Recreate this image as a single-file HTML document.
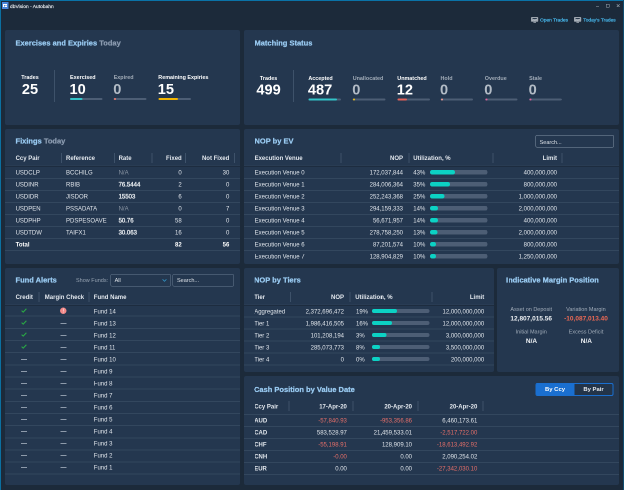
<!DOCTYPE html>
<html><head><meta charset="utf-8"><style>
html,body{margin:0;padding:0;width:624px;height:490px;overflow:hidden;background:#1c2a3a;}
body{position:relative;font-family:"Liberation Sans",sans-serif;}
#w{position:absolute;left:0;top:0;width:1248px;height:980px;transform:scale(0.5);transform-origin:0 0;will-change:transform;}
#w>div,#w>svg{position:absolute;white-space:nowrap;}
</style></head><body><div id="w">
<div style="left:0px;top:0px;width:1248px;height:2px;background:#0a73a8;"></div>
<div style="left:0px;top:0px;width:2px;height:980px;background:#0b6fa0;"></div>
<div style="left:1246px;top:0px;width:2px;height:980px;background:#104e70;"></div>
<div style="left:4px;top:4px;width:13px;height:13.6px;background:#4a86d8;"></div>
<div style="left:6px;top:8px;width:2px;height:6px;background:#ffffff;"></div>
<div style="left:6px;top:8px;width:8.4px;height:1.8px;background:#ffffff;"></div>
<div style="left:9.2px;top:12.2px;width:5.2px;height:1.8px;background:#ffffff;"></div>
<div style="left:11.2px;top:9.6px;width:1.6px;height:2.8px;background:#ffffff;"></div>
<div style="left:20px;top:7.5px;font-size:9.8px;line-height:9.8px;color:#e6eaee;-webkit-text-stroke:0.3px #e6eaee;">dbVision - Autobahn</div>
<div style="left:1192px;top:12.6px;width:6.4px;height:1.2px;background:#9aa4ae;"></div>
<div style="left:1212.4px;top:8px;width:4.4px;height:4.8px;border:1.2px solid #9aa4ae;border-radius:0.8px;"></div>
<svg style="left:1233px;top:7.6px;width:6.8px;height:6.8px" viewBox="0 0 4 4"><path d="M0.3 0.3 L3.7 3.7 M3.7 0.3 L0.3 3.7" stroke="#9aa4ae" stroke-width="0.7"/></svg>
<svg style="left:1062px;top:34px;width:14.8px;height:12px" viewBox="0 0 7.4 6"><rect x="0" y="0" width="7.2" height="4.8" rx="0.8" fill="#9ea6af"/><rect x="1.6" y="1" width="4.2" height="1.1" fill="#2a3a4c"/><path d="M1.2 3.6 L2.6 2.7 L3.6 3.3 L5.8 2.4" stroke="#c9ced4" stroke-width="0.5" fill="none"/><rect x="2.4" y="4.8" width="2.6" height="1" fill="#9ea6af"/></svg>
<div style="left:1080px;top:35.38px;font-size:9.7px;line-height:9.7px;color:#48b8ec;-webkit-text-stroke:0.4px #48b8ec;">Open Trades</div>
<svg style="left:1148px;top:34px;width:14.8px;height:12px" viewBox="0 0 7.4 6"><rect x="0" y="0" width="7.2" height="4.8" rx="0.8" fill="#9ea6af"/><rect x="1.6" y="1" width="4.2" height="1.1" fill="#2a3a4c"/><path d="M1.2 3.6 L2.6 2.7 L3.6 3.3 L5.8 2.4" stroke="#c9ced4" stroke-width="0.5" fill="none"/><rect x="2.4" y="4.8" width="2.6" height="1" fill="#9ea6af"/></svg>
<div style="left:1166.6px;top:35.38px;font-size:9.7px;line-height:9.7px;color:#48b8ec;-webkit-text-stroke:0.4px #48b8ec;">Today's Trades</div>
<div style="left:10px;top:60px;width:470px;height:190px;background:#24374f;border-radius:4px;"></div>
<div style="left:488px;top:60px;width:750px;height:190px;background:#24374f;border-radius:4px;"></div>
<div style="left:10px;top:258px;width:470px;height:270px;background:#24374f;border-radius:4px;"></div>
<div style="left:488px;top:258px;width:750px;height:270px;background:#24374f;border-radius:4px;"></div>
<div style="left:10px;top:536px;width:470px;height:434px;background:#24374f;border-radius:4px;"></div>
<div style="left:488px;top:536px;width:500px;height:208px;background:#24374f;border-radius:4px;"></div>
<div style="left:994px;top:536px;width:244px;height:208px;background:#24374f;border-radius:4px;"></div>
<div style="left:488px;top:752px;width:750px;height:218px;background:#24374f;border-radius:4px;"></div>
<div style="left:31.2px;top:77.74px;font-size:15.2px;line-height:15.2px;color:#9acbf2;font-weight:bold;transform:scaleX(0.9868);transform-origin:0 0;-webkit-text-stroke:0.5px;">Exercises and Expiries <span style="color:#8b9bb0">Today</span></div>
<div style="left:509.2px;top:78.14px;font-size:15.2px;line-height:15.2px;color:#9acbf2;font-weight:bold;transform:scaleX(0.9868);transform-origin:0 0;-webkit-text-stroke:0.5px;">Matching Status</div>
<div style="left:31.2px;top:273.74px;font-size:15.2px;line-height:15.2px;color:#9acbf2;font-weight:bold;transform:scaleX(0.9868);transform-origin:0 0;-webkit-text-stroke:0.5px;">Fixings <span style="color:#8b9bb0">Today</span></div>
<div style="left:509.2px;top:274.34px;font-size:15.2px;line-height:15.2px;color:#9acbf2;font-weight:bold;transform:scaleX(0.9868);transform-origin:0 0;-webkit-text-stroke:0.5px;">NOP by EV</div>
<div style="left:31.2px;top:551.54px;font-size:15.2px;line-height:15.2px;color:#9acbf2;font-weight:bold;transform:scaleX(0.9868);transform-origin:0 0;-webkit-text-stroke:0.5px;">Fund Alerts</div>
<div style="left:508.4px;top:551.94px;font-size:15.2px;line-height:15.2px;color:#9acbf2;font-weight:bold;transform:scaleX(0.9868);transform-origin:0 0;-webkit-text-stroke:0.5px;">NOP by Tiers</div>
<div style="left:1011.6px;top:552.34px;font-size:15.2px;line-height:15.2px;color:#9acbf2;font-weight:bold;transform:scaleX(0.9868);transform-origin:0 0;-webkit-text-stroke:0.5px;">Indicative Margin Position</div>
<div style="left:508.4px;top:771.34px;font-size:15.2px;line-height:15.2px;color:#9acbf2;font-weight:bold;transform:scaleX(0.9868);transform-origin:0 0;-webkit-text-stroke:0.5px;">Cash Position by Value Date</div>
<div style="left:-240px;width:600px;text-align:center;top:149.46px;font-size:10.8px;line-height:10.8px;color:#ffffff;font-weight:bold;">Trades</div>
<div style="left:-240px;width:600px;text-align:center;top:163.88px;font-size:29.2px;line-height:29.2px;color:#ffffff;font-weight:bold;">25</div>
<div style="left:108px;top:140px;width:2px;height:64px;background:#3e526a;"></div>
<div style="left:140px;top:149.46px;font-size:10.8px;line-height:10.8px;color:#ffffff;font-weight:bold;">Exercised</div>
<div style="left:139px;top:163.88px;font-size:29.2px;line-height:29.2px;color:#ffffff;font-weight:bold;">10</div>
<div style="left:140px;top:196px;width:65.2px;height:4px;background:#4d5e75;border-radius:2px;"></div>
<div style="left:140px;top:196px;width:25.2px;height:4px;background:#33c4c8;border-radius:2px;"></div>
<div style="left:227.4px;top:149.46px;font-size:10.8px;line-height:10.8px;color:#a2acb8;font-weight:bold;">Expired</div>
<div style="left:226.4px;top:163.88px;font-size:29.2px;line-height:29.2px;color:#b3bcc6;font-weight:bold;">0</div>
<div style="left:227.4px;top:196px;width:65.2px;height:4px;background:#4d5e75;border-radius:2px;"></div>
<div style="left:228.4px;top:196px;width:4px;height:4px;background:#f07a6c;border-radius:2px;"></div>
<div style="left:316.6px;top:149.46px;font-size:10.8px;line-height:10.8px;color:#ffffff;font-weight:bold;">Remaining Expiries</div>
<div style="left:315.6px;top:163.88px;font-size:29.2px;line-height:29.2px;color:#ffffff;font-weight:bold;">15</div>
<div style="left:316.6px;top:196px;width:65.2px;height:4px;background:#4d5e75;border-radius:2px;"></div>
<div style="left:316.6px;top:196px;width:39.4px;height:4px;background:#f1b400;border-radius:2px;"></div>
<div style="left:237.2px;width:600px;text-align:center;top:150.66px;font-size:10.8px;line-height:10.8px;color:#ffffff;font-weight:bold;">Trades</div>
<div style="left:237.2px;width:600px;text-align:center;top:165.08px;font-size:29.2px;line-height:29.2px;color:#ffffff;font-weight:bold;">499</div>
<div style="left:586px;top:141px;width:2px;height:64px;background:#3e526a;"></div>
<div style="left:616.8px;top:150.66px;font-size:10.8px;line-height:10.8px;color:#ffffff;font-weight:bold;">Accepted</div>
<div style="left:615.8px;top:165.08px;font-size:29.2px;line-height:29.2px;color:#ffffff;font-weight:bold;">487</div>
<div style="left:616.8px;top:197.2px;width:65.2px;height:4px;background:#4d5e75;border-radius:2px;"></div>
<div style="left:616.8px;top:197.2px;width:57px;height:4px;background:#33c4c8;border-radius:2px;"></div>
<div style="left:705.4px;top:150.66px;font-size:10.8px;line-height:10.8px;color:#a2acb8;font-weight:bold;">Unallocated</div>
<div style="left:704.4px;top:165.08px;font-size:29.2px;line-height:29.2px;color:#b3bcc6;font-weight:bold;">0</div>
<div style="left:705.4px;top:197.2px;width:65.2px;height:4px;background:#4d5e75;border-radius:2px;"></div>
<div style="left:706.4px;top:197.2px;width:4px;height:4px;background:#f1c21b;border-radius:2px;"></div>
<div style="left:794.6px;top:150.66px;font-size:10.8px;line-height:10.8px;color:#ffffff;font-weight:bold;">Unmatched</div>
<div style="left:793.6px;top:165.08px;font-size:29.2px;line-height:29.2px;color:#ffffff;font-weight:bold;">12</div>
<div style="left:794.6px;top:197.2px;width:65.2px;height:4px;background:#4d5e75;border-radius:2px;"></div>
<div style="left:794.6px;top:197.2px;width:19.4px;height:4px;background:#e2625a;border-radius:2px;"></div>
<div style="left:881px;top:150.66px;font-size:10.8px;line-height:10.8px;color:#a2acb8;font-weight:bold;">Hold</div>
<div style="left:880px;top:165.08px;font-size:29.2px;line-height:29.2px;color:#b3bcc6;font-weight:bold;">0</div>
<div style="left:881px;top:197.2px;width:65.2px;height:4px;background:#4d5e75;border-radius:2px;"></div>
<div style="left:882px;top:197.2px;width:4px;height:4px;background:#f39a94;border-radius:2px;"></div>
<div style="left:969.6px;top:150.66px;font-size:10.8px;line-height:10.8px;color:#a2acb8;font-weight:bold;">Overdue</div>
<div style="left:968.6px;top:165.08px;font-size:29.2px;line-height:29.2px;color:#b3bcc6;font-weight:bold;">0</div>
<div style="left:969.6px;top:197.2px;width:65.2px;height:4px;background:#4d5e75;border-radius:2px;"></div>
<div style="left:970.6px;top:197.2px;width:4px;height:4px;background:#e0609e;border-radius:2px;"></div>
<div style="left:1058.2px;top:150.66px;font-size:10.8px;line-height:10.8px;color:#a2acb8;font-weight:bold;">Stale</div>
<div style="left:1057.2px;top:165.08px;font-size:29.2px;line-height:29.2px;color:#b3bcc6;font-weight:bold;">0</div>
<div style="left:1058.2px;top:197.2px;width:65.2px;height:4px;background:#4d5e75;border-radius:2px;"></div>
<div style="left:1059.2px;top:197.2px;width:4px;height:4px;background:#e0609e;border-radius:2px;"></div>
<div style="left:122px;top:306px;width:2px;height:20px;background:#3e526a;"></div>
<div style="left:228px;top:306px;width:2px;height:20px;background:#3e526a;"></div>
<div style="left:303px;top:306px;width:2px;height:20px;background:#3e526a;"></div>
<div style="left:370px;top:306px;width:2px;height:20px;background:#3e526a;"></div>
<div style="left:468px;top:306px;width:2px;height:20px;background:#3e526a;"></div>
<div style="left:31.2px;top:310.44px;font-size:12px;line-height:12px;color:#e4e9ef;font-weight:bold;">Ccy Pair</div>
<div style="left:132px;top:310.44px;font-size:12px;line-height:12px;color:#e4e9ef;font-weight:bold;">Reference</div>
<div style="left:237.2px;top:310.44px;font-size:12px;line-height:12px;color:#e4e9ef;font-weight:bold;">Rate</div>
<div style="left:-236.6px;width:600px;text-align:right;top:310.44px;font-size:12px;line-height:12px;color:#e4e9ef;font-weight:bold;">Fixed</div>
<div style="left:-141.4px;width:600px;text-align:right;top:310.44px;font-size:12px;line-height:12px;color:#e4e9ef;font-weight:bold;">Not Fixed</div>
<div style="left:10px;top:330.8px;width:470px;height:1px;background:#2f4259;"></div>
<div style="left:10px;top:331.8px;width:470px;height:2px;background:#1d2c3f;"></div>
<div style="left:31.2px;top:339.44px;font-size:12px;line-height:12px;color:#e2e7ed;">USDCLP</div>
<div style="left:132px;top:339.44px;font-size:12px;line-height:12px;color:#e2e7ed;">BCCHILG</div>
<div style="left:237.2px;top:339.44px;font-size:12px;line-height:12px;color:#8a96a4;">N/A</div>
<div style="left:-236.6px;width:600px;text-align:right;top:339.44px;font-size:12px;line-height:12px;color:#e2e7ed;">0</div>
<div style="left:-141.4px;width:600px;text-align:right;top:339.44px;font-size:12px;line-height:12px;color:#e2e7ed;">30</div>
<div style="left:10px;top:355.8px;width:470px;height:2px;background:#33475e;"></div>
<div style="left:31.2px;top:363.44px;font-size:12px;line-height:12px;color:#e2e7ed;">USDINR</div>
<div style="left:132px;top:363.44px;font-size:12px;line-height:12px;color:#e2e7ed;">RBIB</div>
<div style="left:237.2px;top:363.44px;font-size:12px;line-height:12px;color:#e6eaee;-webkit-text-stroke:0.6px #e6eaee;">76.5444</div>
<div style="left:-236.6px;width:600px;text-align:right;top:363.44px;font-size:12px;line-height:12px;color:#e2e7ed;">2</div>
<div style="left:-141.4px;width:600px;text-align:right;top:363.44px;font-size:12px;line-height:12px;color:#e2e7ed;">0</div>
<div style="left:10px;top:379.8px;width:470px;height:2px;background:#33475e;"></div>
<div style="left:31.2px;top:387.44px;font-size:12px;line-height:12px;color:#e2e7ed;">USDIDR</div>
<div style="left:132px;top:387.44px;font-size:12px;line-height:12px;color:#e2e7ed;">JISDOR</div>
<div style="left:237.2px;top:387.44px;font-size:12px;line-height:12px;color:#e6eaee;-webkit-text-stroke:0.6px #e6eaee;">15503</div>
<div style="left:-236.6px;width:600px;text-align:right;top:387.44px;font-size:12px;line-height:12px;color:#e2e7ed;">6</div>
<div style="left:-141.4px;width:600px;text-align:right;top:387.44px;font-size:12px;line-height:12px;color:#e2e7ed;">0</div>
<div style="left:10px;top:403.8px;width:470px;height:2px;background:#33475e;"></div>
<div style="left:31.2px;top:411.44px;font-size:12px;line-height:12px;color:#e2e7ed;">USDPEN</div>
<div style="left:132px;top:411.44px;font-size:12px;line-height:12px;color:#e2e7ed;">PSSADATA</div>
<div style="left:237.2px;top:411.44px;font-size:12px;line-height:12px;color:#8a96a4;">N/A</div>
<div style="left:-236.6px;width:600px;text-align:right;top:411.44px;font-size:12px;line-height:12px;color:#e2e7ed;">0</div>
<div style="left:-141.4px;width:600px;text-align:right;top:411.44px;font-size:12px;line-height:12px;color:#e2e7ed;">7</div>
<div style="left:10px;top:427.8px;width:470px;height:2px;background:#33475e;"></div>
<div style="left:31.2px;top:435.44px;font-size:12px;line-height:12px;color:#e2e7ed;">USDPHP</div>
<div style="left:132px;top:435.44px;font-size:12px;line-height:12px;color:#e2e7ed;">PDSPESOAVE</div>
<div style="left:237.2px;top:435.44px;font-size:12px;line-height:12px;color:#e6eaee;-webkit-text-stroke:0.6px #e6eaee;">50.76</div>
<div style="left:-236.6px;width:600px;text-align:right;top:435.44px;font-size:12px;line-height:12px;color:#e2e7ed;">58</div>
<div style="left:-141.4px;width:600px;text-align:right;top:435.44px;font-size:12px;line-height:12px;color:#e2e7ed;">0</div>
<div style="left:10px;top:451.8px;width:470px;height:2px;background:#33475e;"></div>
<div style="left:31.2px;top:459.44px;font-size:12px;line-height:12px;color:#e2e7ed;">USDTDW</div>
<div style="left:132px;top:459.44px;font-size:12px;line-height:12px;color:#e2e7ed;">TAIFX1</div>
<div style="left:237.2px;top:459.44px;font-size:12px;line-height:12px;color:#e6eaee;-webkit-text-stroke:0.6px #e6eaee;">30.063</div>
<div style="left:-236.6px;width:600px;text-align:right;top:459.44px;font-size:12px;line-height:12px;color:#e2e7ed;">16</div>
<div style="left:-141.4px;width:600px;text-align:right;top:459.44px;font-size:12px;line-height:12px;color:#e2e7ed;">0</div>
<div style="left:10px;top:475.8px;width:470px;height:2px;background:#33475e;"></div>
<div style="left:31.2px;top:483.44px;font-size:12px;line-height:12px;color:#ffffff;font-weight:bold;">Total</div>
<div style="left:-236.6px;width:600px;text-align:right;top:483.44px;font-size:12px;line-height:12px;color:#ffffff;font-weight:bold;">82</div>
<div style="left:-141.4px;width:600px;text-align:right;top:483.44px;font-size:12px;line-height:12px;color:#ffffff;font-weight:bold;">56</div>
<div style="left:10px;top:499.8px;width:470px;height:2px;background:#33475e;"></div>
<div style="left:1070.6px;top:270.4px;width:157.4px;height:25px;background:transparent;border:1.6px solid #8393a6;border-radius:3px;box-sizing:border-box;"></div>
<div style="left:1079.2px;top:278.68px;font-size:11px;line-height:11px;color:#dde2e8;">Search...</div>
<div style="left:681px;top:306px;width:2px;height:20px;background:#3e526a;"></div>
<div style="left:816.6px;top:306px;width:2px;height:20px;background:#3e526a;"></div>
<div style="left:984.6px;top:306px;width:2px;height:20px;background:#3e526a;"></div>
<div style="left:1123px;top:306px;width:2px;height:20px;background:#3e526a;"></div>
<div style="left:509.2px;top:310.44px;font-size:12px;line-height:12px;color:#e4e9ef;font-weight:bold;">Execution Venue</div>
<div style="left:206px;width:600px;text-align:right;top:310.44px;font-size:12px;line-height:12px;color:#e4e9ef;font-weight:bold;">NOP</div>
<div style="left:826.6px;top:310.44px;font-size:12px;line-height:12px;color:#e4e9ef;font-weight:bold;">Utilization, %</div>
<div style="left:514px;width:600px;text-align:right;top:310.44px;font-size:12px;line-height:12px;color:#e4e9ef;font-weight:bold;">Limit</div>
<div style="left:488px;top:330.8px;width:750px;height:1px;background:#2f4259;"></div>
<div style="left:488px;top:331.8px;width:750px;height:2px;background:#1d2c3f;"></div>
<div style="left:509.2px;top:339.44px;font-size:12px;line-height:12px;color:#e2e7ed;">Execution Venue 0</div>
<div style="left:206px;width:600px;text-align:right;top:339.44px;font-size:12px;line-height:12px;color:#e2e7ed;">172,037,844</div>
<div style="left:826.6px;top:339.44px;font-size:12px;line-height:12px;color:#e2e7ed;">43%</div>
<div style="left:860px;top:340px;width:115.4px;height:8.6px;background:#4d5e75;border-radius:4.3px;"></div>
<div style="left:860px;top:340px;width:49.6px;height:8.6px;background:#0cd2c4;border-radius:4.3px;"></div>
<div style="left:514px;width:600px;text-align:right;top:339.44px;font-size:12px;line-height:12px;color:#e2e7ed;">400,000,000</div>
<div style="left:488px;top:355.8px;width:750px;height:2px;background:#33475e;"></div>
<div style="left:509.2px;top:363.44px;font-size:12px;line-height:12px;color:#e2e7ed;">Execution Venue 1</div>
<div style="left:206px;width:600px;text-align:right;top:363.44px;font-size:12px;line-height:12px;color:#e2e7ed;">284,006,364</div>
<div style="left:826.6px;top:363.44px;font-size:12px;line-height:12px;color:#e2e7ed;">35%</div>
<div style="left:860px;top:364px;width:115.4px;height:8.6px;background:#4d5e75;border-radius:4.3px;"></div>
<div style="left:860px;top:364px;width:40.4px;height:8.6px;background:#0cd2c4;border-radius:4.3px;"></div>
<div style="left:514px;width:600px;text-align:right;top:363.44px;font-size:12px;line-height:12px;color:#e2e7ed;">800,000,000</div>
<div style="left:488px;top:379.8px;width:750px;height:2px;background:#33475e;"></div>
<div style="left:509.2px;top:387.44px;font-size:12px;line-height:12px;color:#e2e7ed;">Execution Venue 2</div>
<div style="left:206px;width:600px;text-align:right;top:387.44px;font-size:12px;line-height:12px;color:#e2e7ed;">252,243,368</div>
<div style="left:826.6px;top:387.44px;font-size:12px;line-height:12px;color:#e2e7ed;">25%</div>
<div style="left:860px;top:388px;width:115.4px;height:8.6px;background:#4d5e75;border-radius:4.3px;"></div>
<div style="left:860px;top:388px;width:28.8px;height:8.6px;background:#0cd2c4;border-radius:4.3px;"></div>
<div style="left:514px;width:600px;text-align:right;top:387.44px;font-size:12px;line-height:12px;color:#e2e7ed;">1,000,000,000</div>
<div style="left:488px;top:403.8px;width:750px;height:2px;background:#33475e;"></div>
<div style="left:509.2px;top:411.44px;font-size:12px;line-height:12px;color:#e2e7ed;">Execution Venue 3</div>
<div style="left:206px;width:600px;text-align:right;top:411.44px;font-size:12px;line-height:12px;color:#e2e7ed;">294,159,333</div>
<div style="left:826.6px;top:411.44px;font-size:12px;line-height:12px;color:#e2e7ed;">14%</div>
<div style="left:860px;top:412px;width:115.4px;height:8.6px;background:#4d5e75;border-radius:4.3px;"></div>
<div style="left:860px;top:412px;width:16.2px;height:8.6px;background:#0cd2c4;border-radius:4.3px;"></div>
<div style="left:514px;width:600px;text-align:right;top:411.44px;font-size:12px;line-height:12px;color:#e2e7ed;">2,000,000,000</div>
<div style="left:488px;top:427.8px;width:750px;height:2px;background:#33475e;"></div>
<div style="left:509.2px;top:435.44px;font-size:12px;line-height:12px;color:#e2e7ed;">Execution Venue 4</div>
<div style="left:206px;width:600px;text-align:right;top:435.44px;font-size:12px;line-height:12px;color:#e2e7ed;">56,671,957</div>
<div style="left:826.6px;top:435.44px;font-size:12px;line-height:12px;color:#e2e7ed;">14%</div>
<div style="left:860px;top:436px;width:115.4px;height:8.6px;background:#4d5e75;border-radius:4.3px;"></div>
<div style="left:860px;top:436px;width:16.2px;height:8.6px;background:#0cd2c4;border-radius:4.3px;"></div>
<div style="left:514px;width:600px;text-align:right;top:435.44px;font-size:12px;line-height:12px;color:#e2e7ed;">400,000,000</div>
<div style="left:488px;top:451.8px;width:750px;height:2px;background:#33475e;"></div>
<div style="left:509.2px;top:459.44px;font-size:12px;line-height:12px;color:#e2e7ed;">Execution Venue 5</div>
<div style="left:206px;width:600px;text-align:right;top:459.44px;font-size:12px;line-height:12px;color:#e2e7ed;">278,758,250</div>
<div style="left:826.6px;top:459.44px;font-size:12px;line-height:12px;color:#e2e7ed;">13%</div>
<div style="left:860px;top:460px;width:115.4px;height:8.6px;background:#4d5e75;border-radius:4.3px;"></div>
<div style="left:860px;top:460px;width:15px;height:8.6px;background:#0cd2c4;border-radius:4.3px;"></div>
<div style="left:514px;width:600px;text-align:right;top:459.44px;font-size:12px;line-height:12px;color:#e2e7ed;">2,000,000,000</div>
<div style="left:488px;top:475.8px;width:750px;height:2px;background:#33475e;"></div>
<div style="left:509.2px;top:483.44px;font-size:12px;line-height:12px;color:#e2e7ed;">Execution Venue 6</div>
<div style="left:206px;width:600px;text-align:right;top:483.44px;font-size:12px;line-height:12px;color:#e2e7ed;">87,201,574</div>
<div style="left:826.6px;top:483.44px;font-size:12px;line-height:12px;color:#e2e7ed;">10%</div>
<div style="left:860px;top:484px;width:115.4px;height:8.6px;background:#4d5e75;border-radius:4.3px;"></div>
<div style="left:860px;top:484px;width:11.6px;height:8.6px;background:#0cd2c4;border-radius:4.3px;"></div>
<div style="left:514px;width:600px;text-align:right;top:483.44px;font-size:12px;line-height:12px;color:#e2e7ed;">800,000,000</div>
<div style="left:488px;top:499.8px;width:750px;height:2px;background:#33475e;"></div>
<div style="left:509.2px;top:507.44px;font-size:12px;line-height:12px;color:#e2e7ed;">Execution Venue 7</div>
<div style="left:206px;width:600px;text-align:right;top:507.44px;font-size:12px;line-height:12px;color:#e2e7ed;">128,904,829</div>
<div style="left:826.6px;top:507.44px;font-size:12px;line-height:12px;color:#e2e7ed;">10%</div>
<div style="left:860px;top:508px;width:115.4px;height:8.6px;background:#4d5e75;border-radius:4.3px;"></div>
<div style="left:860px;top:508px;width:11.6px;height:8.6px;background:#0cd2c4;border-radius:4.3px;"></div>
<div style="left:514px;width:600px;text-align:right;top:507.44px;font-size:12px;line-height:12px;color:#e2e7ed;">1,250,000,000</div>
<div style="left:152px;top:554.68px;font-size:11px;line-height:11px;color:#98a5b4;">Show Funds:</div>
<div style="left:220.8px;top:548px;width:121px;height:24.8px;background:transparent;border:1.6px solid #687b91;border-radius:3px;box-sizing:border-box;"></div>
<div style="left:229.2px;top:555.08px;font-size:11px;line-height:11px;color:#e0e5ea;">All</div>
<svg style="left:324px;top:557px;width:10px;height:8px" viewBox="0 0 5 4"><path d="M0.6 0.8 L2.5 2.8 L4.4 0.8" fill="none" stroke="#3290c0" stroke-width="0.8"/></svg>
<div style="left:345px;top:548px;width:123px;height:24.8px;background:transparent;border:1.6px solid #687b91;border-radius:3px;box-sizing:border-box;"></div>
<div style="left:354px;top:555.08px;font-size:11px;line-height:11px;color:#dde2e8;">Search...</div>
<div style="left:77px;top:584px;width:2px;height:20px;background:#3e526a;"></div>
<div style="left:177px;top:584px;width:2px;height:20px;background:#3e526a;"></div>
<div style="left:31.2px;top:588.24px;font-size:12px;line-height:12px;color:#e4e9ef;font-weight:bold;">Credit</div>
<div style="left:89.6px;top:588.24px;font-size:12px;line-height:12px;color:#e4e9ef;font-weight:bold;">Margin Check</div>
<div style="left:187.6px;top:588.24px;font-size:12px;line-height:12px;color:#e4e9ef;font-weight:bold;">Fund Name</div>
<div style="left:10px;top:608.6px;width:470px;height:1px;background:#2f4259;"></div>
<div style="left:10px;top:609.6px;width:470px;height:2px;background:#1d2c3f;"></div>
<svg style="left:42px;top:616px;width:12px;height:10px" viewBox="0 0 6 5"><path d="M0.6 2.6 L2.2 4.1 L5.4 0.7" fill="none" stroke="#2aa845" stroke-width="1.1"/></svg>
<div style="left:120px;top:615.2px;width:13.2px;height:13.2px;border-radius:6.6px;background:#f38a8a;"></div>
<div style="left:126px;top:617.4px;width:1.4px;height:4.8px;background:#ffffff;"></div>
<div style="left:126px;top:623.2px;width:1.4px;height:1.4px;background:#ffffff;"></div>
<div style="left:187.6px;top:616.84px;font-size:12px;line-height:12px;color:#e2e7ed;">Fund 14</div>
<div style="left:10px;top:631.4px;width:470px;height:2px;background:#33475e;"></div>
<svg style="left:42px;top:640px;width:12px;height:10px" viewBox="0 0 6 5"><path d="M0.6 2.6 L2.2 4.1 L5.4 0.7" fill="none" stroke="#2aa845" stroke-width="1.1"/></svg>
<div style="left:120.6px;top:646.4px;width:12px;height:1.2px;background:#8d9aaa;"></div>
<div style="left:187.6px;top:640.84px;font-size:12px;line-height:12px;color:#e2e7ed;">Fund 13</div>
<div style="left:10px;top:655.71px;width:470px;height:2px;background:#33475e;"></div>
<svg style="left:42px;top:664px;width:12px;height:10px" viewBox="0 0 6 5"><path d="M0.6 2.6 L2.2 4.1 L5.4 0.7" fill="none" stroke="#2aa845" stroke-width="1.1"/></svg>
<div style="left:120.6px;top:670.4px;width:12px;height:1.2px;background:#8d9aaa;"></div>
<div style="left:187.6px;top:664.84px;font-size:12px;line-height:12px;color:#e2e7ed;">Fund 12</div>
<div style="left:10px;top:680.02px;width:470px;height:2px;background:#33475e;"></div>
<svg style="left:42px;top:688px;width:12px;height:10px" viewBox="0 0 6 5"><path d="M0.6 2.6 L2.2 4.1 L5.4 0.7" fill="none" stroke="#2aa845" stroke-width="1.1"/></svg>
<div style="left:120.6px;top:694.4px;width:12px;height:1.2px;background:#8d9aaa;"></div>
<div style="left:187.6px;top:688.84px;font-size:12px;line-height:12px;color:#e2e7ed;">Fund 11</div>
<div style="left:10px;top:704.33px;width:470px;height:2px;background:#33475e;"></div>
<div style="left:42px;top:718.4px;width:12px;height:1.2px;background:#8d9aaa;"></div>
<div style="left:120.6px;top:718.4px;width:12px;height:1.2px;background:#8d9aaa;"></div>
<div style="left:187.6px;top:712.84px;font-size:12px;line-height:12px;color:#e2e7ed;">Fund 10</div>
<div style="left:10px;top:728.64px;width:470px;height:2px;background:#33475e;"></div>
<div style="left:42px;top:742.4px;width:12px;height:1.2px;background:#8d9aaa;"></div>
<div style="left:120.6px;top:742.4px;width:12px;height:1.2px;background:#8d9aaa;"></div>
<div style="left:187.6px;top:736.84px;font-size:12px;line-height:12px;color:#e2e7ed;">Fund 9</div>
<div style="left:10px;top:752.95px;width:470px;height:2px;background:#33475e;"></div>
<div style="left:42px;top:766.4px;width:12px;height:1.2px;background:#8d9aaa;"></div>
<div style="left:120.6px;top:766.4px;width:12px;height:1.2px;background:#8d9aaa;"></div>
<div style="left:187.6px;top:760.84px;font-size:12px;line-height:12px;color:#e2e7ed;">Fund 8</div>
<div style="left:10px;top:777.26px;width:470px;height:2px;background:#33475e;"></div>
<div style="left:42px;top:790.4px;width:12px;height:1.2px;background:#8d9aaa;"></div>
<div style="left:120.6px;top:790.4px;width:12px;height:1.2px;background:#8d9aaa;"></div>
<div style="left:187.6px;top:784.84px;font-size:12px;line-height:12px;color:#e2e7ed;">Fund 7</div>
<div style="left:10px;top:801.57px;width:470px;height:2px;background:#33475e;"></div>
<div style="left:42px;top:814.4px;width:12px;height:1.2px;background:#8d9aaa;"></div>
<div style="left:120.6px;top:814.4px;width:12px;height:1.2px;background:#8d9aaa;"></div>
<div style="left:187.6px;top:808.84px;font-size:12px;line-height:12px;color:#e2e7ed;">Fund 6</div>
<div style="left:10px;top:825.88px;width:470px;height:2px;background:#33475e;"></div>
<div style="left:42px;top:838.4px;width:12px;height:1.2px;background:#8d9aaa;"></div>
<div style="left:120.6px;top:838.4px;width:12px;height:1.2px;background:#8d9aaa;"></div>
<div style="left:187.6px;top:832.84px;font-size:12px;line-height:12px;color:#e2e7ed;">Fund 5</div>
<div style="left:10px;top:850.19px;width:470px;height:2px;background:#33475e;"></div>
<div style="left:42px;top:862.4px;width:12px;height:1.2px;background:#8d9aaa;"></div>
<div style="left:120.6px;top:862.4px;width:12px;height:1.2px;background:#8d9aaa;"></div>
<div style="left:187.6px;top:856.84px;font-size:12px;line-height:12px;color:#e2e7ed;">Fund 4</div>
<div style="left:10px;top:874.5px;width:470px;height:2px;background:#33475e;"></div>
<div style="left:42px;top:886.4px;width:12px;height:1.2px;background:#8d9aaa;"></div>
<div style="left:120.6px;top:886.4px;width:12px;height:1.2px;background:#8d9aaa;"></div>
<div style="left:187.6px;top:880.84px;font-size:12px;line-height:12px;color:#e2e7ed;">Fund 3</div>
<div style="left:10px;top:898.81px;width:470px;height:2px;background:#33475e;"></div>
<div style="left:42px;top:910.4px;width:12px;height:1.2px;background:#8d9aaa;"></div>
<div style="left:120.6px;top:910.4px;width:12px;height:1.2px;background:#8d9aaa;"></div>
<div style="left:187.6px;top:904.84px;font-size:12px;line-height:12px;color:#e2e7ed;">Fund 2</div>
<div style="left:10px;top:923.12px;width:470px;height:2px;background:#33475e;"></div>
<div style="left:42px;top:934.4px;width:12px;height:1.2px;background:#8d9aaa;"></div>
<div style="left:120.6px;top:934.4px;width:12px;height:1.2px;background:#8d9aaa;"></div>
<div style="left:187.6px;top:928.84px;font-size:12px;line-height:12px;color:#e2e7ed;">Fund 1</div>
<div style="left:10px;top:947.43px;width:470px;height:2px;background:#33475e;"></div>
<div style="left:580px;top:584px;width:2px;height:20px;background:#3e526a;"></div>
<div style="left:699.4px;top:584px;width:2px;height:20px;background:#3e526a;"></div>
<div style="left:863px;top:584px;width:2px;height:20px;background:#3e526a;"></div>
<div style="left:508.4px;top:588.24px;font-size:12px;line-height:12px;color:#e4e9ef;font-weight:bold;">Tier</div>
<div style="left:88px;width:600px;text-align:right;top:588.24px;font-size:12px;line-height:12px;color:#e4e9ef;font-weight:bold;">NOP</div>
<div style="left:710.4px;top:588.24px;font-size:12px;line-height:12px;color:#e4e9ef;font-weight:bold;">Utilization, %</div>
<div style="left:368.4px;width:600px;text-align:right;top:588.24px;font-size:12px;line-height:12px;color:#e4e9ef;font-weight:bold;">Limit</div>
<div style="left:488px;top:608.6px;width:500px;height:1px;background:#2f4259;"></div>
<div style="left:488px;top:609.6px;width:500px;height:2px;background:#1d2c3f;"></div>
<div style="left:508.4px;top:617.44px;font-size:12px;line-height:12px;color:#e2e7ed;">Aggregated</div>
<div style="left:88px;width:600px;text-align:right;top:617.44px;font-size:12px;line-height:12px;color:#e2e7ed;">2,372,696,472</div>
<div style="left:712px;top:617.44px;font-size:12px;line-height:12px;color:#e2e7ed;">19%</div>
<div style="left:743.6px;top:617.8px;width:115px;height:8px;background:#4d5e75;border-radius:4px;"></div>
<div style="left:743.6px;top:617.8px;width:50.6px;height:8px;background:#0cd2c4;border-radius:4px;"></div>
<div style="left:368.4px;width:600px;text-align:right;top:617.44px;font-size:12px;line-height:12px;color:#e2e7ed;">12,000,000,000</div>
<div style="left:488px;top:633.2px;width:500px;height:2px;background:#33475e;"></div>
<div style="left:508.4px;top:641.44px;font-size:12px;line-height:12px;color:#e2e7ed;">Tier 1</div>
<div style="left:88px;width:600px;text-align:right;top:641.44px;font-size:12px;line-height:12px;color:#e2e7ed;">1,986,416,505</div>
<div style="left:712px;top:641.44px;font-size:12px;line-height:12px;color:#e2e7ed;">16%</div>
<div style="left:743.6px;top:641.8px;width:115px;height:8px;background:#4d5e75;border-radius:4px;"></div>
<div style="left:743.6px;top:641.8px;width:40.6px;height:8px;background:#0cd2c4;border-radius:4px;"></div>
<div style="left:368.4px;width:600px;text-align:right;top:641.44px;font-size:12px;line-height:12px;color:#e2e7ed;">12,000,000,000</div>
<div style="left:488px;top:657.2px;width:500px;height:2px;background:#33475e;"></div>
<div style="left:508.4px;top:665.44px;font-size:12px;line-height:12px;color:#e2e7ed;">Tier 2</div>
<div style="left:88px;width:600px;text-align:right;top:665.44px;font-size:12px;line-height:12px;color:#e2e7ed;">101,208,194</div>
<div style="left:712px;top:665.44px;font-size:12px;line-height:12px;color:#e2e7ed;">3%</div>
<div style="left:743.6px;top:665.8px;width:115px;height:8px;background:#4d5e75;border-radius:4px;"></div>
<div style="left:743.6px;top:665.8px;width:29.6px;height:8px;background:#0cd2c4;border-radius:4px;"></div>
<div style="left:368.4px;width:600px;text-align:right;top:665.44px;font-size:12px;line-height:12px;color:#e2e7ed;">3,000,000,000</div>
<div style="left:488px;top:681.2px;width:500px;height:2px;background:#33475e;"></div>
<div style="left:508.4px;top:689.44px;font-size:12px;line-height:12px;color:#e2e7ed;">Tier 3</div>
<div style="left:88px;width:600px;text-align:right;top:689.44px;font-size:12px;line-height:12px;color:#e2e7ed;">285,073,773</div>
<div style="left:712px;top:689.44px;font-size:12px;line-height:12px;color:#e2e7ed;">8%</div>
<div style="left:743.6px;top:689.8px;width:115px;height:8px;background:#4d5e75;border-radius:4px;"></div>
<div style="left:743.6px;top:689.8px;width:16.6px;height:8px;background:#0cd2c4;border-radius:4px;"></div>
<div style="left:368.4px;width:600px;text-align:right;top:689.44px;font-size:12px;line-height:12px;color:#e2e7ed;">3,500,000,000</div>
<div style="left:488px;top:705.2px;width:500px;height:2px;background:#33475e;"></div>
<div style="left:508.4px;top:713.44px;font-size:12px;line-height:12px;color:#e2e7ed;">Tier 4</div>
<div style="left:88px;width:600px;text-align:right;top:713.44px;font-size:12px;line-height:12px;color:#e2e7ed;">0</div>
<div style="left:712px;top:713.44px;font-size:12px;line-height:12px;color:#e2e7ed;">0%</div>
<div style="left:743.6px;top:713.8px;width:115px;height:8px;background:#4d5e75;border-radius:4px;"></div>
<div style="left:743.6px;top:713.8px;width:16.6px;height:8px;background:#0cd2c4;border-radius:4px;"></div>
<div style="left:368.4px;width:600px;text-align:right;top:713.44px;font-size:12px;line-height:12px;color:#e2e7ed;">200,000,000</div>
<div style="left:488px;top:729.2px;width:500px;height:2px;background:#33475e;"></div>
<div style="left:762.4px;width:600px;text-align:center;top:613.48px;font-size:11px;line-height:11px;color:#a2adba;">Asset on Deposit</div>
<div style="left:762.4px;width:600px;text-align:center;top:630.4px;font-size:13px;line-height:13px;color:#f0f3f6;font-weight:bold;">12,807,015.56</div>
<div style="left:871.8px;width:600px;text-align:center;top:613.48px;font-size:11px;line-height:11px;color:#a2adba;">Variation Margin</div>
<div style="left:872px;width:600px;text-align:center;top:630.4px;font-size:13px;line-height:13px;color:#ee6a55;font-weight:bold;">-10,087,013.40</div>
<div style="left:762.4px;width:600px;text-align:center;top:658.08px;font-size:11px;line-height:11px;color:#a2adba;">Initial Margin</div>
<div style="left:763px;width:600px;text-align:center;top:675.4px;font-size:13px;line-height:13px;color:#f0f3f6;font-weight:bold;">N/A</div>
<div style="left:872px;width:600px;text-align:center;top:658.08px;font-size:11px;line-height:11px;color:#a2adba;">Excess Deficit</div>
<div style="left:872.8px;width:600px;text-align:center;top:675.4px;font-size:13px;line-height:13px;color:#f0f3f6;font-weight:bold;">N/A</div>
<div style="left:1071px;top:766px;width:156px;height:26px;background:#233449;border:2px solid #1a6fd0;border-radius:4px;box-sizing:border-box;"></div>
<div style="left:1072px;top:767px;width:77px;height:24px;background:#1a6fd0;border-radius:3px 0 0 3px;"></div>
<div style="left:810px;width:600px;text-align:center;top:773.42px;font-size:11.8px;line-height:11.8px;color:#ffffff;font-weight:bold;">By Ccy</div>
<div style="left:887px;width:600px;text-align:center;top:773.42px;font-size:11.8px;line-height:11.8px;color:#e6eaef;font-weight:bold;">By Pair</div>
<div style="left:577px;top:802px;width:2px;height:20px;background:#3e526a;"></div>
<div style="left:705px;top:802px;width:2px;height:20px;background:#3e526a;"></div>
<div style="left:835.4px;top:802px;width:2px;height:20px;background:#3e526a;"></div>
<div style="left:964.8px;top:802px;width:2px;height:20px;background:#3e526a;"></div>
<div style="left:508.4px;top:806.64px;font-size:12px;line-height:12px;color:#e4e9ef;font-weight:bold;">Ccy Pair</div>
<div style="left:93.8px;width:600px;text-align:right;top:806.64px;font-size:12px;line-height:12px;color:#e4e9ef;font-weight:bold;">17-Apr-20</div>
<div style="left:224px;width:600px;text-align:right;top:806.64px;font-size:12px;line-height:12px;color:#e4e9ef;font-weight:bold;">20-Apr-20</div>
<div style="left:354.6px;width:600px;text-align:right;top:806.64px;font-size:12px;line-height:12px;color:#e4e9ef;font-weight:bold;">20-Apr-20</div>
<div style="left:488px;top:827.8px;width:750px;height:2px;background:#33475e;"></div>
<div style="left:508.4px;top:835.04px;font-size:12px;line-height:12px;color:#e2e7ed;font-weight:bold;">AUD</div>
<div style="left:93.8px;width:600px;text-align:right;top:835.04px;font-size:12px;line-height:12px;color:#e8706a;">-57,840.93</div>
<div style="left:224px;width:600px;text-align:right;top:835.04px;font-size:12px;line-height:12px;color:#e8706a;">-953,356.86</div>
<div style="left:354.6px;width:600px;text-align:right;top:835.04px;font-size:12px;line-height:12px;color:#e2e7ed;">6,460,173.61</div>
<div style="left:488px;top:851.8px;width:750px;height:2px;background:#33475e;"></div>
<div style="left:508.4px;top:859.04px;font-size:12px;line-height:12px;color:#e2e7ed;font-weight:bold;">CAD</div>
<div style="left:93.8px;width:600px;text-align:right;top:859.04px;font-size:12px;line-height:12px;color:#e2e7ed;">583,528.97</div>
<div style="left:224px;width:600px;text-align:right;top:859.04px;font-size:12px;line-height:12px;color:#e2e7ed;">21,459,533.01</div>
<div style="left:354.6px;width:600px;text-align:right;top:859.04px;font-size:12px;line-height:12px;color:#e8706a;">-2,517,722.00</div>
<div style="left:488px;top:875.8px;width:750px;height:2px;background:#33475e;"></div>
<div style="left:508.4px;top:883.04px;font-size:12px;line-height:12px;color:#e2e7ed;font-weight:bold;">CHF</div>
<div style="left:93.8px;width:600px;text-align:right;top:883.04px;font-size:12px;line-height:12px;color:#e8706a;">-55,198.91</div>
<div style="left:224px;width:600px;text-align:right;top:883.04px;font-size:12px;line-height:12px;color:#e2e7ed;">128,909.10</div>
<div style="left:354.6px;width:600px;text-align:right;top:883.04px;font-size:12px;line-height:12px;color:#e8706a;">-18,613,492.92</div>
<div style="left:488px;top:899.8px;width:750px;height:2px;background:#33475e;"></div>
<div style="left:508.4px;top:907.04px;font-size:12px;line-height:12px;color:#e2e7ed;font-weight:bold;">CNH</div>
<div style="left:93.8px;width:600px;text-align:right;top:907.04px;font-size:12px;line-height:12px;color:#e8706a;">-0.00</div>
<div style="left:224px;width:600px;text-align:right;top:907.04px;font-size:12px;line-height:12px;color:#e2e7ed;">0.00</div>
<div style="left:354.6px;width:600px;text-align:right;top:907.04px;font-size:12px;line-height:12px;color:#e2e7ed;">2,090,254.02</div>
<div style="left:488px;top:923.8px;width:750px;height:2px;background:#33475e;"></div>
<div style="left:508.4px;top:931.04px;font-size:12px;line-height:12px;color:#e2e7ed;font-weight:bold;">EUR</div>
<div style="left:93.8px;width:600px;text-align:right;top:931.04px;font-size:12px;line-height:12px;color:#e2e7ed;">0.00</div>
<div style="left:224px;width:600px;text-align:right;top:931.04px;font-size:12px;line-height:12px;color:#e2e7ed;">0.00</div>
<div style="left:354.6px;width:600px;text-align:right;top:931.04px;font-size:12px;line-height:12px;color:#e8706a;">-27,342,030.10</div>
<div style="left:488px;top:947.8px;width:750px;height:2px;background:#33475e;"></div>
</div></body></html>
